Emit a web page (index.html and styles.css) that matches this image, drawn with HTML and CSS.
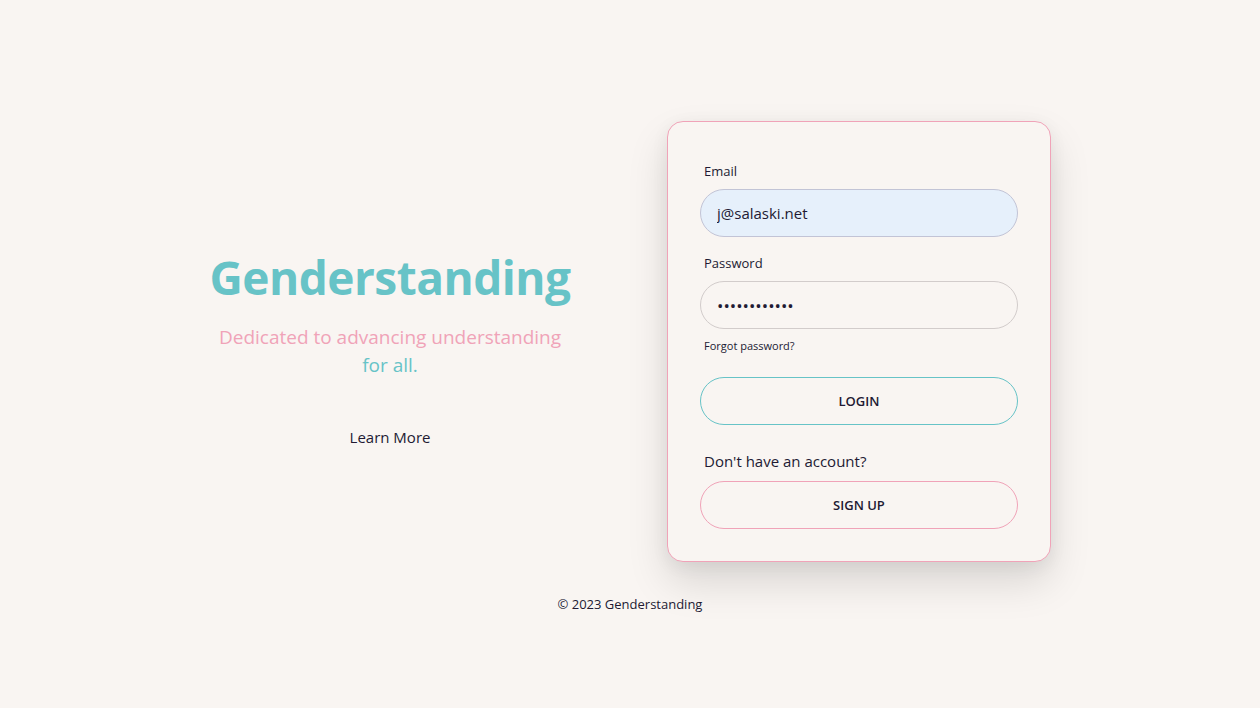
FILE: index.html
```html
<!DOCTYPE html>
<html lang="en">
<head>
<meta charset="utf-8">
<title>Genderstanding</title>
<link rel="stylesheet" href="styles.css">
</head>
<body>
<div class="page">
  <main class="main">
    <section class="hero">
      <h1 class="title">Genderstanding</h1>
      <p class="tagline"><span class="pink">Dedicated to advancing understanding</span><br><span class="teal">for all.</span></p>
      <a class="learn" href="#">Learn More</a>
    </section>
    <section class="card">
      <label class="label" for="email">Email</label>
      <input class="input input-filled" id="email" type="text" value="j@salaski.net">
      <label class="label label-pw" for="pw">Password</label>
      <input class="input input-pw" id="pw" type="password" value="aaaaaaaaaaaa">
      <a class="forgot" href="#">Forgot password?</a>
      <button class="btn btn-login">LOGIN</button>
      <p class="noacc">Don't have an account?</p>
      <button class="btn btn-signup">SIGN UP</button>
    </section>
  </main>
  <footer class="footer">© 2023 Genderstanding</footer>
</div>
</body>
</html>
```
FILE: styles.css
```css
* { box-sizing: border-box; }
html, body { margin: 0; padding: 0; }
body {
  background: #f9f5f2;
  font-family: "Open Sans", "Noto Sans", sans-serif;
  color: #221a33;
}
.page {
  height: 708px;
  display: flex;
  flex-direction: column;
  align-items: center;
  padding-top: 121px;
}
.main {
  display: flex;
  align-items: center;
  gap: 85px;
  padding-right: 11px;
}
.hero {
  width: 384px;
  display: flex;
  flex-direction: column;
  align-items: center;
  text-align: center;
  padding-top: 14px;
}
.title {
  margin: 0;
  font-size: 46px;
  line-height: 56px;
  font-weight: 700;
  color: #67c3c7;
  letter-spacing: -0.5px;
}
.tagline {
  margin: 18px 0 0;
  font-size: 19px;
  line-height: 28px;
}
.pink { color: #f0a3b8; }
.teal { color: #67c3c7; }
.learn {
  margin-top: 46px;
  font-size: 15px;
  line-height: 24px;
  color: #221a33;
  text-decoration: none;
}
.card {
  width: 384px;
  border: 1px solid #f0a3b8;
  border-radius: 16px;
  background: #f9f5f2;
  padding: 39px 32px 32px;
  display: flex;
  flex-direction: column;
  box-shadow: 0 20px 40px rgba(0,0,0,0.13), 0 4px 18px rgba(0,0,0,0.06);
}
.label {
  font-size: 13px;
  line-height: 20px;
  padding-left: 4px;
}
.label-pw { margin-top: 16px; }
.input {
  margin-top: 8px;
  height: 48px;
  width: 100%;
  border: 1px solid #cfc8c8;
  border-radius: 24px;
  background: #f9f5f2;
  padding: 0 16px;
  font-family: inherit;
  font-size: 15px;
  color: #221a33;
  outline: none;
}
.input-pw {
  font-size: 17px;
  border-color: #d2cccb;
}
.input-filled {
  background: #e6f0fb;
  border-color: #c2c4d6;
}
.forgot {
  margin-top: 9px;
  padding-left: 4px;
  font-size: 11px;
  line-height: 16px;
  color: #221a33;
  text-decoration: none;
}
.btn {
  height: 48px;
  width: 100%;
  border-radius: 24px;
  background: transparent;
  font-family: inherit;
  font-size: 13px;
  font-weight: 600;
  color: #221a33;
  cursor: pointer;
}
.btn-login {
  margin-top: 23px;
  border: 1px solid #67c3c7;
}
.noacc {
  margin: 24px 0 0;
  padding-left: 4px;
  font-size: 15px;
  line-height: 24px;
}
.btn-signup {
  margin-top: 8px;
  border: 1px solid #f0a3b8;
}
.footer {
  margin-top: 32px;
  font-size: 13px;
  line-height: 20px;
  color: #221a33;
}
```
